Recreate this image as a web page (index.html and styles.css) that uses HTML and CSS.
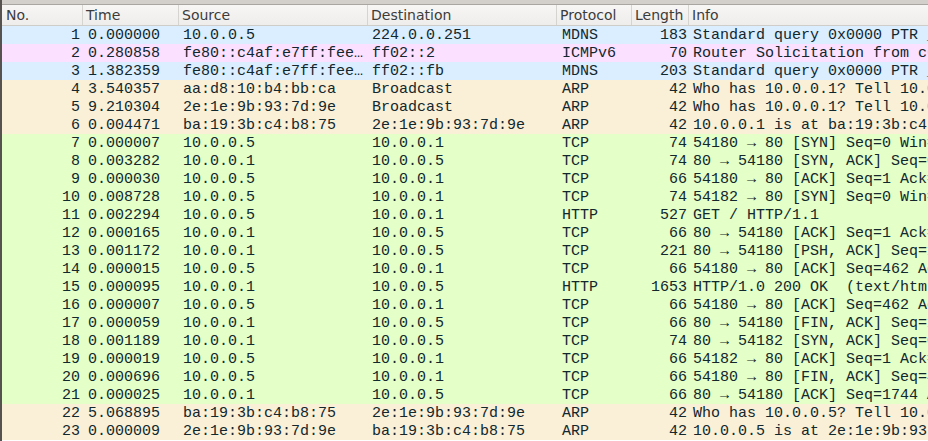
FILE: index.html
```html
<!DOCTYPE html>
<html>
<head>
<meta charset="utf-8">
<link rel="stylesheet" href="styles.css">
</head>
<body>
<div class="frame">
  <div class="topbar"></div>
  <div class="table">
    <div class="row head">
      <div class="c no">No.</div><div class="c time">Time</div><div class="c src">Source</div><div class="c dst">Destination</div><div class="c proto">Protocol</div><div class="c len">Length</div><div class="c info">Info</div>
    </div>
    <div class="row udp"><div class="c no">1</div><div class="c time">0.000000</div><div class="c src">10.0.0.5</div><div class="c dst">224.0.0.251</div><div class="c proto">MDNS</div><div class="c len">183</div><div class="c info">Standard query 0x0000 PTR _companion-link._tcp.local</div></div>
    <div class="row icmp"><div class="c no">2</div><div class="c time">0.280858</div><div class="c src">fe80::c4af:e7ff:fee…</div><div class="c dst">ff02::2</div><div class="c proto">ICMPv6</div><div class="c len">70</div><div class="c info">Router Solicitation from c6:af:e7:e8:1d:4a</div></div>
    <div class="row udp"><div class="c no">3</div><div class="c time">1.382359</div><div class="c src">fe80::c4af:e7ff:fee…</div><div class="c dst">ff02::fb</div><div class="c proto">MDNS</div><div class="c len">203</div><div class="c info">Standard query 0x0000 PTR _companion-link._tcp.local</div></div>
    <div class="row arp"><div class="c no">4</div><div class="c time">3.540357</div><div class="c src">aa:d8:10:b4:bb:ca</div><div class="c dst">Broadcast</div><div class="c proto">ARP</div><div class="c len">42</div><div class="c info">Who has 10.0.0.1? Tell 10.0.0.5</div></div>
    <div class="row arp"><div class="c no">5</div><div class="c time">9.210304</div><div class="c src">2e:1e:9b:93:7d:9e</div><div class="c dst">Broadcast</div><div class="c proto">ARP</div><div class="c len">42</div><div class="c info">Who has 10.0.0.1? Tell 10.0.0.5</div></div>
    <div class="row arp"><div class="c no">6</div><div class="c time">0.004471</div><div class="c src">ba:19:3b:c4:b8:75</div><div class="c dst">2e:1e:9b:93:7d:9e</div><div class="c proto">ARP</div><div class="c len">42</div><div class="c info">10.0.0.1 is at ba:19:3b:c4:b8:75</div></div>
    <div class="row tcp"><div class="c no">7</div><div class="c time">0.000007</div><div class="c src">10.0.0.5</div><div class="c dst">10.0.0.1</div><div class="c proto">TCP</div><div class="c len">74</div><div class="c info">54180 → 80 [SYN] Seq=0 Win=64240</div></div>
    <div class="row tcp"><div class="c no">8</div><div class="c time">0.003282</div><div class="c src">10.0.0.1</div><div class="c dst">10.0.0.5</div><div class="c proto">TCP</div><div class="c len">74</div><div class="c info">80 → 54180 [SYN, ACK] Seq=0 Ack=1</div></div>
    <div class="row tcp"><div class="c no">9</div><div class="c time">0.000030</div><div class="c src">10.0.0.5</div><div class="c dst">10.0.0.1</div><div class="c proto">TCP</div><div class="c len">66</div><div class="c info">54180 → 80 [ACK] Seq=1 Ack=1 Win=64256</div></div>
    <div class="row tcp"><div class="c no">10</div><div class="c time">0.008728</div><div class="c src">10.0.0.5</div><div class="c dst">10.0.0.1</div><div class="c proto">TCP</div><div class="c len">74</div><div class="c info">54182 → 80 [SYN] Seq=0 Win=64240</div></div>
    <div class="row tcp"><div class="c no">11</div><div class="c time">0.002294</div><div class="c src">10.0.0.5</div><div class="c dst">10.0.0.1</div><div class="c proto">HTTP</div><div class="c len">527</div><div class="c info">GET / HTTP/1.1</div></div>
    <div class="row tcp"><div class="c no">12</div><div class="c time">0.000165</div><div class="c src">10.0.0.1</div><div class="c dst">10.0.0.5</div><div class="c proto">TCP</div><div class="c len">66</div><div class="c info">80 → 54180 [ACK] Seq=1 Ack=462 Win=64768</div></div>
    <div class="row tcp"><div class="c no">13</div><div class="c time">0.001172</div><div class="c src">10.0.0.1</div><div class="c dst">10.0.0.5</div><div class="c proto">TCP</div><div class="c len">221</div><div class="c info">80 → 54180 [PSH, ACK] Seq=1 Ack=462</div></div>
    <div class="row tcp"><div class="c no">14</div><div class="c time">0.000015</div><div class="c src">10.0.0.5</div><div class="c dst">10.0.0.1</div><div class="c proto">TCP</div><div class="c len">66</div><div class="c info">54180 → 80 [ACK] Seq=462 Ack=156</div></div>
    <div class="row tcp"><div class="c no">15</div><div class="c time">0.000095</div><div class="c src">10.0.0.1</div><div class="c dst">10.0.0.5</div><div class="c proto">HTTP</div><div class="c len">1653</div><div class="c info">HTTP/1.0 200 OK  (text/html)</div></div>
    <div class="row tcp"><div class="c no">16</div><div class="c time">0.000007</div><div class="c src">10.0.0.5</div><div class="c dst">10.0.0.1</div><div class="c proto">TCP</div><div class="c len">66</div><div class="c info">54180 → 80 [ACK] Seq=462 Ack=1744</div></div>
    <div class="row tcp"><div class="c no">17</div><div class="c time">0.000059</div><div class="c src">10.0.0.1</div><div class="c dst">10.0.0.5</div><div class="c proto">TCP</div><div class="c len">66</div><div class="c info">80 → 54180 [FIN, ACK] Seq=1744 Ack=462</div></div>
    <div class="row tcp"><div class="c no">18</div><div class="c time">0.001189</div><div class="c src">10.0.0.1</div><div class="c dst">10.0.0.5</div><div class="c proto">TCP</div><div class="c len">74</div><div class="c info">80 → 54182 [SYN, ACK] Seq=0 Ack=1</div></div>
    <div class="row tcp"><div class="c no">19</div><div class="c time">0.000019</div><div class="c src">10.0.0.5</div><div class="c dst">10.0.0.1</div><div class="c proto">TCP</div><div class="c len">66</div><div class="c info">54182 → 80 [ACK] Seq=1 Ack=1 Win=64256</div></div>
    <div class="row tcp"><div class="c no">20</div><div class="c time">0.000696</div><div class="c src">10.0.0.5</div><div class="c dst">10.0.0.1</div><div class="c proto">TCP</div><div class="c len">66</div><div class="c info">54180 → 80 [FIN, ACK] Seq=462 Ack=1745</div></div>
    <div class="row tcp"><div class="c no">21</div><div class="c time">0.000025</div><div class="c src">10.0.0.1</div><div class="c dst">10.0.0.5</div><div class="c proto">TCP</div><div class="c len">66</div><div class="c info">80 → 54180 [ACK] Seq=1744 Ack=463</div></div>
    <div class="row arp"><div class="c no">22</div><div class="c time">5.068895</div><div class="c src">ba:19:3b:c4:b8:75</div><div class="c dst">2e:1e:9b:93:7d:9e</div><div class="c proto">ARP</div><div class="c len">42</div><div class="c info">Who has 10.0.0.5? Tell 10.0.0.1</div></div>
    <div class="row arp"><div class="c no">23</div><div class="c time">0.000009</div><div class="c src">2e:1e:9b:93:7d:9e</div><div class="c dst">ba:19:3b:c4:b8:75</div><div class="c proto">ARP</div><div class="c len">42</div><div class="c info">10.0.0.5 is at 2e:1e:9b:93:7d:9e</div></div>
  </div>
</div>
</body>
</html>
```
FILE: styles.css
```css
html, body {
  margin: 0;
  padding: 0;
  background: #ffffff;
  overflow: hidden;
}
.frame {
  width: 928px;
  height: 441px;
  overflow: hidden;
  display: flex;
  flex-direction: column;
  border-left: 2px solid #55524f;
  box-sizing: border-box;
}
.topbar {
  height: 4px;
  background: #d3d0cc;
  border-bottom: 1px solid #a9a6a2;
  flex: none;
}
.table {
  display: flex;
  flex-direction: column;
  flex: none;
}
.row {
  display: grid;
  grid-template-columns: 81px 96px 189px 189px 75px 57px 239px;
  height: 18px;
  line-height: 18px;
  flex: none;
  font-family: "Liberation Mono", monospace;
  font-size: 15px;
  color: #12272e;
  white-space: pre;
}
.row.head {
  height: 20px;
  line-height: 21px;
  background: linear-gradient(#f7f6f5, #eeedec);
  border-bottom: 1px solid #cfcdca;
  font-family: "DejaVu Sans", sans-serif;
  font-size: 14px;
  color: #3c3c3c;
}
.row.head .c {
  border-right: 1px solid #d6d4d1;
  padding-left: 3px;
  text-align: left;
}
.row.head .c.no { padding-left: 4px; }
.row.head .c.info { border-right: none; }
.c {
  overflow: hidden;
  box-sizing: border-box;
}
.c.no { text-align: right; padding-right: 3px; }
.c.time { padding-left: 5px; }
.c.src { padding-left: 4px; }
.c.dst { padding-left: 4px; }
.c.proto { padding-left: 5px; }
.c.len { text-align: right; padding-right: 2px; }
.c.info { padding-left: 4px; }
.udp { background: #daeeff; }
.icmp { background: #fce0ff; }
.arp { background: #faf0d7; }
.tcp { background: #e4ffc7; }
.row:not(.head) .c { padding-top: 1px; line-height: 17px; }
```
